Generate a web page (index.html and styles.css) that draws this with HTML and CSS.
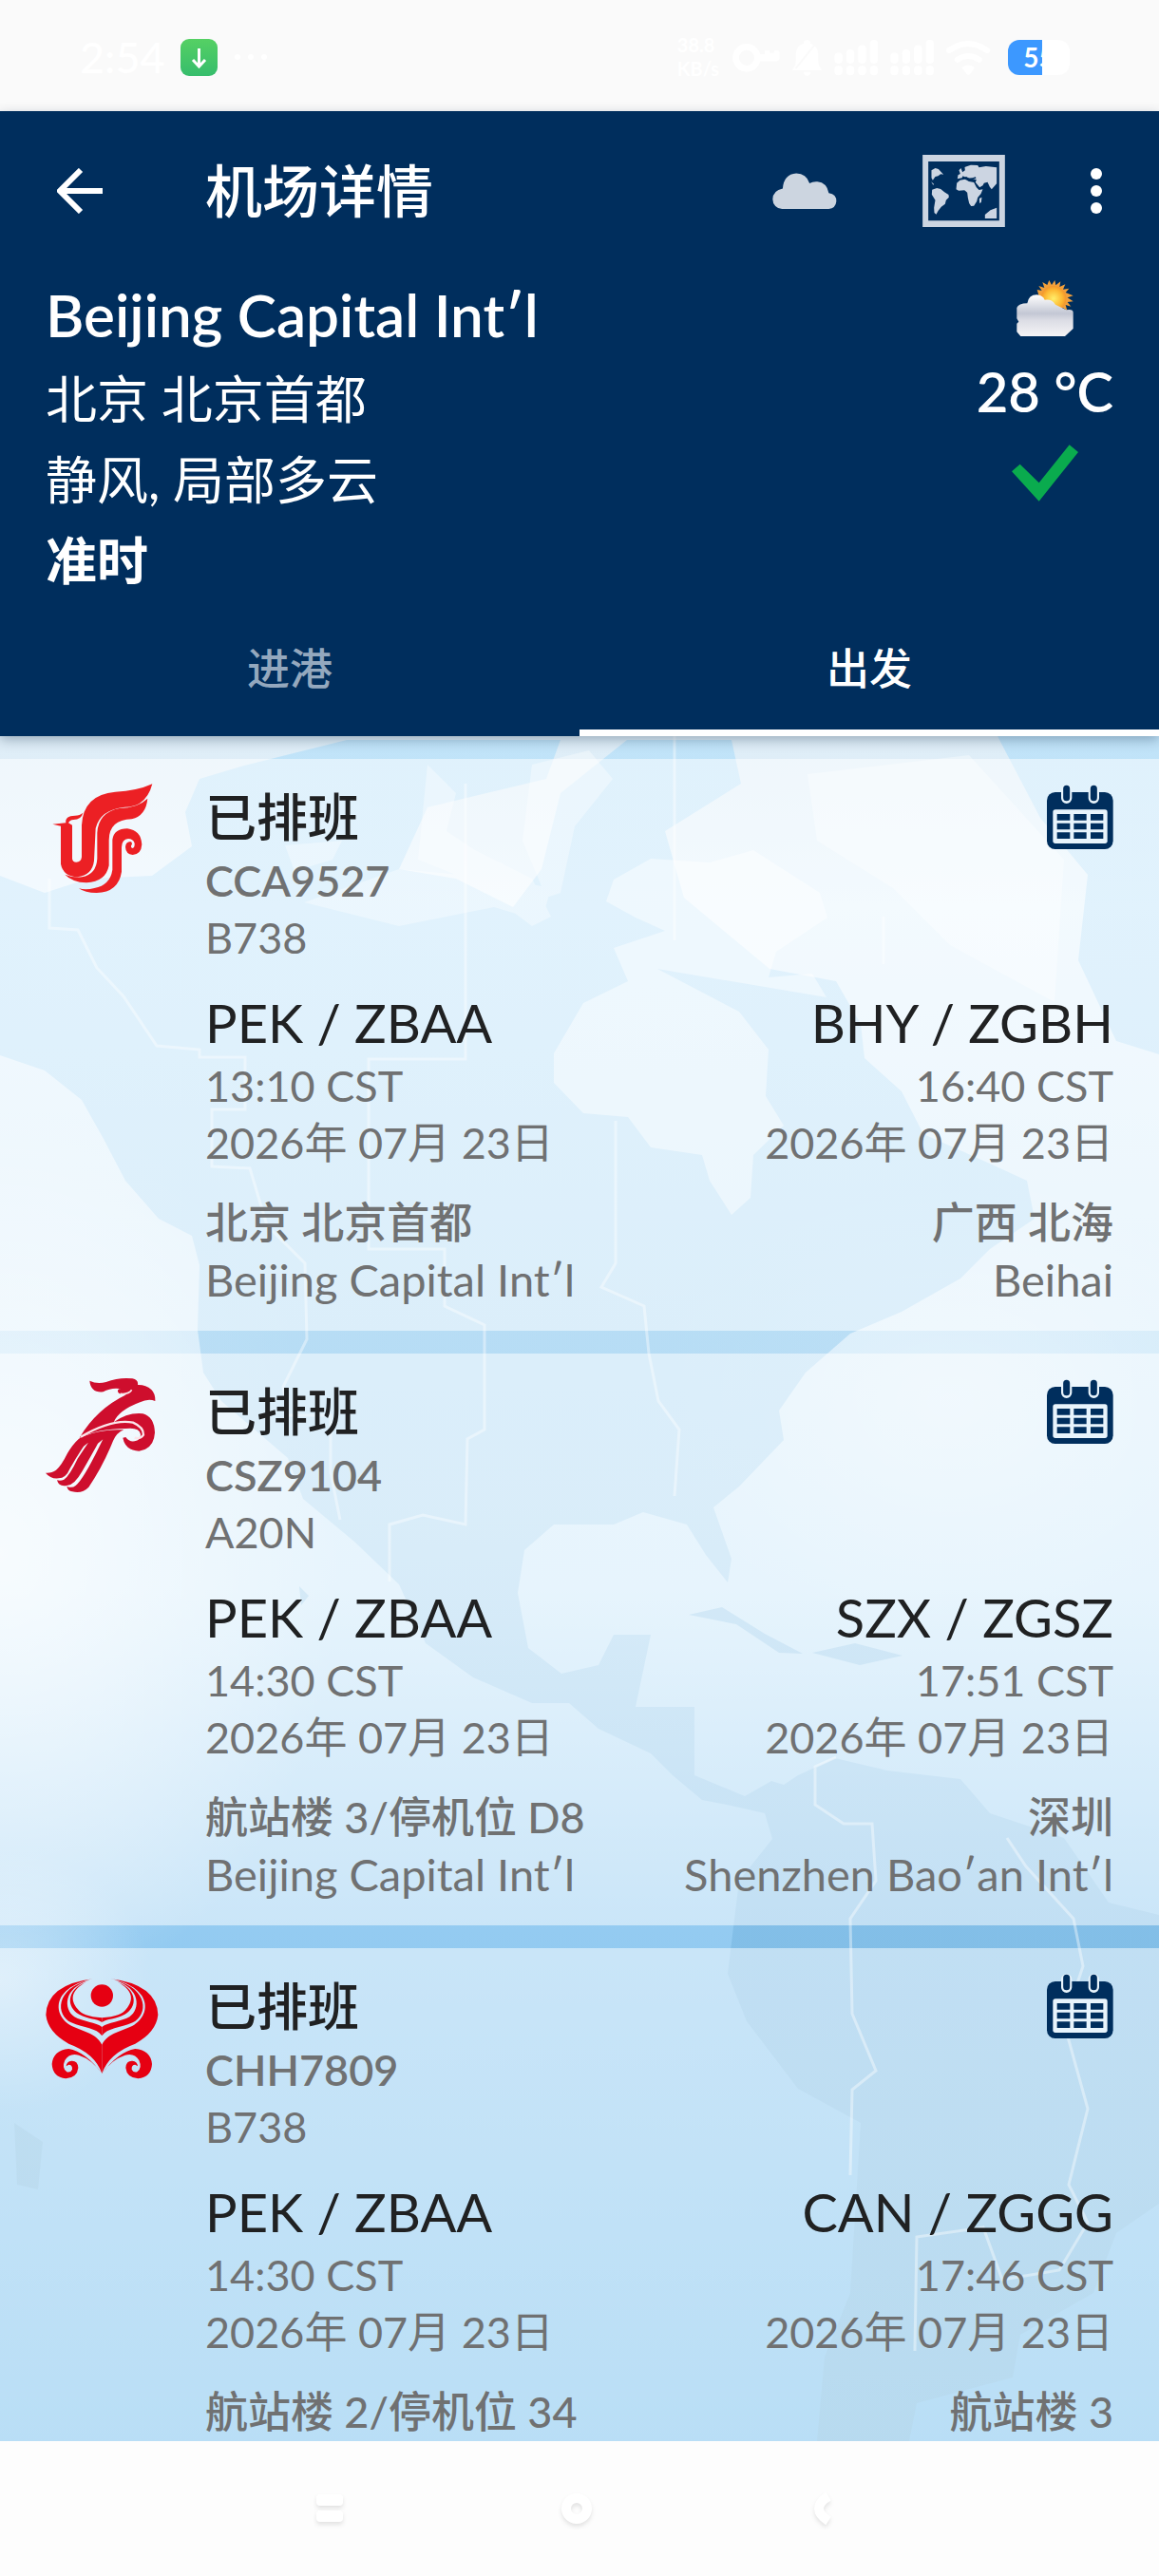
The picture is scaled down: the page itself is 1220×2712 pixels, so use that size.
FILE: index.html
```html
<!DOCTYPE html>
<html lang="zh-CN">
<head>
<meta charset="utf-8">
<meta name="viewport" content="width=device-width, initial-scale=1">
<title>机场详情</title>
<link rel="stylesheet" href="styles.css">
</head>
<body>
<svg class="defs" aria-hidden="true">
  <symbol id="calendar" viewBox="123 45 210 210">
    <path fill="#002e5d" d="M149 72h157a26 26 0 0 1 26 26v128a26 26 0 0 1-26 26H149a26 26 0 0 1-26-26V98a26 26 0 0 1 26-26z"/>
    <rect x="142" y="127" width="172" height="107" rx="8" fill="#e8f4fc"/>
    <path fill="#002e5d" d="M155 141h41v20h-41zM208 141h40v20h-40zM261 141h40v20h-40zM155 170h41v20h-41zM208 170h40v20h-40zM261 170h40v20h-40zM155 199h41v20h-41zM208 199h40v20h-40zM261 199h40v20h-40z"/>
    <g stroke-linecap="round"><path stroke="#e8f4fc" stroke-width="34" d="M185 65v26M271 65v26"/><path stroke="#002e5d" stroke-width="21" d="M185 61v28M271 61v28"/></g>
  </symbol>
</svg>
<div class="app">
  <div class="status">
    <span class="clock">2:54</span>
    <svg class="download" viewBox="0 0 39 39"><defs><linearGradient id="gr" x2="0" y2="1"><stop stop-color="#55d064"/><stop offset="1" stop-color="#36bd6c"/></linearGradient></defs><rect width="39" height="39" rx="9" fill="url(#gr)"/><path d="M19.500 10v18M13 22l6.500 7 6.500-7" fill="none" stroke="#fff" stroke-width="3"/></svg>
    <svg class="more" viewBox="0 0 34 6" fill="#fff"><circle cx="3" cy="3" r="3"/><circle cx="17" cy="3" r="3"/><circle cx="31" cy="3" r="3"/></svg>
    <span class="speed">38.8<br>KB/s</span>
    <svg class="tray" viewBox="257 88 810 116" fill="#fff">
      <circle cx="302" cy="147" r="34" fill="none" stroke="#fff" stroke-width="20"/><path d="M340 136v22h57q8-2 8-10v-16q0-8-7-8h-10v8h-14v-8h-15v12z"/>
      <path d="M444 186q12-14 12-30v-22q2-27 24-31 1-12 11-12t11 12q22 5 24 31v22q0 16 12 30zM480 191h23q-2 12-12 12t-11-12z"/><path d="M456 180l66-82" stroke="#fafafa" stroke-width="6"/>
      <g id="sig"><rect x="577" y="131" width="25" height="34" rx="12"/><rect x="614" y="121" width="25" height="44" rx="12"/><rect x="651" y="107" width="25" height="58" rx="12"/><rect x="688" y="91" width="25" height="74" rx="12"/><rect x="577" y="172" width="25" height="30" rx="12"/><rect x="614" y="172" width="25" height="30" rx="12"/><rect x="651" y="172" width="25" height="30" rx="12"/><rect x="688" y="172" width="25" height="30" rx="12"/></g>
      <use href="#sig" x="175"/>
      <g fill="none" stroke="#fff" stroke-width="18" stroke-linecap="round"><path d="M936 124q60-42 119 0M962 153q34-23 68 0"/></g><path d="M976 178q20-16 40 0l-14 19q-6 6-12 0z"/>
    </svg>
    <span class="battery">55</span>
  </div>

  <header class="header">
    <div class="toolbar">
      <button class="icon-btn back" aria-label="返回"><svg viewBox="0 0 48 48"><path d="M48 24H4M25 2L3 24l22 22" fill="none" stroke="#fff" stroke-width="6"/></svg></button>
      <h1 class="title">机场详情</h1>
      <button class="icon-btn cloud" aria-label="天气"><svg viewBox="162 125 205 116"><path fill="#ccd5e0" d="M193 239a31 31 0 0 1-30-31q1-28 32-34 3-45 43-48 32 1 42 31 10-6 25-5 30 3 36 36 25 3 24 27-2 22-24 24z"/></svg></button>
      <button class="icon-btn map" aria-label="地图"><svg viewBox="638 69 260 228" fill="#ccd5e2"><path fill-rule="evenodd" d="M638 69h260v228H638zM656 90v187h224V90z"/><path d="M666 118L678 111 688 114 704 131 695 130 687 136 678 138 670 149 666 142zM665 154L674 162 671 164z"/><path d="M668 179L683 174 695 177 707 187 720 195 721 203 712 212 709 224 697 233 687 246 681 257 675 252 674 236 678 212 667 194z"/><path d="M744 178L746 158 756 149 772 146 784 153 800 156 808 172 816 180 828 178 822 192 812 204 809 216 800 230 791 231 785 222 781 205 779 188 770 181 752 182zM817 207L825 203 823 219 818 222z"/><path d="M748 145L750 133 757 129 753 118 759 111 764 124 772 118 771 108 790 101 812 102 816 109 838 105 872 109 872 160 856 178 850 170 843 155 832 158 828 166 818 172 805 156 808 147 790 146 776 138 762 142z"/><path d="M835 258L852 244 872 236V270H835z"/><path d="M764 138q18 13 42 3" stroke="#002e5d" stroke-width="5" fill="none"/></svg></button>
      <button class="icon-btn dots" aria-label="更多"><svg viewBox="0 0 12 48" fill="#fff"><circle cx="6" cy="6" r="6"/><circle cx="6" cy="24" r="6"/><circle cx="6" cy="42" r="6"/></svg></button>
    </div>
    <div class="info">
      <div class="airport">
        <p class="name">Beijing Capital Int′l</p>
        <p>北京 北京首都</p>
        <p>静风, 局部多云</p>
        <p class="strong">准时</p>
      </div>
      <div class="weather">
        <svg class="sky" viewBox="147 45 180 180"><defs><linearGradient id="cl" x2="0" y2="1"><stop stop-color="#fff"/><stop offset=".45" stop-color="#c3c7d4"/><stop offset=".62" stop-color="#dcdde5"/><stop offset="1" stop-color="#f5f4f6"/></linearGradient><radialGradient id="su"><stop stop-color="#ffee6a"/><stop offset=".7" stop-color="#fdb833"/><stop offset="1" stop-color="#f3952c"/></radialGradient></defs><path fill="#f1a03c" d="M250 45l8 15 10-15 3 16 15-12-3 17 18-8-7 16 19-3-11 13 24 10-18 6 18 12-18 2 11 14-17-5 5 18-15-10-2 14-12-12-60-38-6-20 15 3-10-15 18 6-6-18 15 9z"/><circle cx="264" cy="103" r="40" fill="url(#su)"/><path fill="url(#cl)" d="M148 132q5-14 33-14 4-27 30-27 20 2 25 16 23-4 34 15l34 17q22-4 22 8v51l-26 24H160l-12-14v-26l6-6-6-10z"/></svg>
        <p class="temp">28 °C</p>
        <svg class="tick" viewBox="132 562 210 180"><path fill="#0aab4e" d="M132 647l26-23 60 59 96-120 28 23-124 155z"/></svg>
      </div>
    </div>
    <nav class="tabs">
      <button class="tab">进港</button>
      <button class="tab active">出发</button>
    </nav>
  </header>

  <main class="list">
    <svg class="world" viewBox="0 0 1220 1795" preserveAspectRatio="none" aria-hidden="true">
      <defs>
        <linearGradient id="sea" x2="0" y2="1"><stop stop-color="#deedf7"/><stop offset=".1" stop-color="#e6f4fd"/><stop offset=".34" stop-color="#d6ecfa"/><stop offset=".5" stop-color="#cee9fa"/><stop offset=".7" stop-color="#94cbf1"/><stop offset="1" stop-color="#73bdec"/></linearGradient>
        <radialGradient id="glow"><stop stop-color="#fff" stop-opacity=".65"/><stop offset="1" stop-color="#fff" stop-opacity="0"/></radialGradient>
        <linearGradient id="land" x2="0" y2="1"><stop stop-color="#a8dbfa" stop-opacity=".55"/><stop offset=".45" stop-color="#a0d0ef" stop-opacity=".6"/><stop offset=".7" stop-color="#72b2de" stop-opacity=".5"/><stop offset="1" stop-color="#6aa9cc" stop-opacity=".4"/></linearGradient>
      </defs>
      <path fill="url(#sea)" d="M0 0h1220v1795H0z"/>
      <ellipse cx="0" cy="860" rx="360" ry="480" fill="url(#glow)"/>
      <ellipse cx="0" cy="1310" rx="160" ry="140" fill="url(#glow)" opacity=".6"/>
      <ellipse cx="1000" cy="700" rx="320" ry="240" fill="url(#glow)" opacity=".5"/>
      <path fill="url(#land)" d="M0 147L47 165 93 150 160 147 202 116 195 80 210 45 257 31 365 4 590 4 575 45 450 75 420 140 480 150 540 180 570 140 590 60 660 4 770 4 780 50 700 100 720 170 810 245 880 258 906 303 910 339 949 374 972 419 1042 450 1081 468 1089 508 1042 540 1011 571 949 606 895 629 848 670 820 710 825 741 778 790 751 812 770 866 766 891 743 862 723 830 677 817 646 830 583 830 552 857 545 902 556 960 591 987 630 978 646 946 685 946 669 1022 731 1022 731 1094 784 1116 812 1100 825 1104 840 1094 879 1076 934 1089 1011 1098 1042 1134 1120 1160 1167 1228 1220 1241 1220 1545 1175 1576 1151 1639 1074 1683 1066 1728 965 1755 957 1795 860 1795 868 1706 895 1639 906 1460 840 1424 786 1353 766 1303 778 1205 813 1161 805 1134 770 1126 739 1120 708 1094 685 1071 630 1045 599 1018 560 1018 498 991 448 955 420 893 373 848 319 803 303 760 233 700 214 670 208 625 210 557 202 526 167 508 132 468 109 424 86 383 47 352 0 336z"/>
      <path fill="url(#land)" d="M1050 0H1220V335L1175 321 1135 236 1145 146 1095 86zM725 925L760 917 805 945 845 966 820 965 775 935zM855 965L900 955 950 968 905 978zM315 895l10 10-8 10zM15 1460l30 20-5 50-22-5z"/>
      <path fill="#fff" opacity=".45" d="M692 245L778 290 809 330 806 379 825 410 793 441 790 486 770 504 747 468 739 441 685 433 661 401 614 397 583 365 583 334 614 281 661 258 646 223 700 205 669 191 638 174 646 151 685 129 747 133 793 120 863 165 871 191 817 227 809 254 855 250 870 275z"/>
      <path fill="#fff" opacity=".35" d="M450 30L480 60 470 100 500 120 560 150 580 190 560 200 520 170 490 150 440 130zM560 30L620 15 645 45 605 95 590 165 575 170 550 110zM300 115L360 110 350 130 310 142zM320 175L420 140 530 150 580 160 570 195 520 180 420 200zM850 40L1020 20 1120 130 1110 280 1000 220 940 160 860 110z"/>
      <g fill="none" stroke="#fff" stroke-width="3" opacity=".4"><path d="M52 150v52l30 2 20 40 28 30 35 52 45 4v8h48v55h-35v60l40 2 18 60 40 40 2 80-25 50 5 30h45v60l10 50M490 50v290H388v200h80v60l42 20v110l-18 10-2 90-45-10-35 10v60M710 0v215M930 190v50M648 405v150l-15 25 45 20 5 50 10 50 22 30-5 70"/><path d="M880 1075l-22 10v40l30 20h30l4 60-27 40 2 100 25 60-25 20-2 90M1060 1160l20 30 50 55 10 50-20 60 25 90-20 80 20 40-30 50-60 10-20-55-70 10-2 120"/></g>
    </svg>

    <article class="card">
      <svg class="logo" viewBox="54 75 360 360" fill="#ec2024"><path d="M391 76q-11 43-40 61-18 11-47 12-78 8-92 67l-5 103q-6 46-52 51-45-2-53-41V209l-26-6 42-4q-4-22 29-23 15 0 25-9-5 21-30 22-12 1-16 10l12 7v106q1 11 13 11 15 0 17-16V206q5-96 106-105 69-3 117-25z"/><path d="M376 122q-5 54-50 65-72 2-72 67v80q-10 51-71 54-45-2-68-26 25 11 54 8 45-8 48-58V230q4-64 70-77 58-1 89-31z"/><path d="M265 252q5-35 47-35 43 5 46 50-2 31-29 33-22-3-23-25 1-16 16-17 5 1 5 8-7 8 1 13 8-2 7-16-5-14-20-14-20 1-21 27v77q-10 65-79 67-37 0-56-14 23 6 49-1 50-10 57-58z"/></svg>
      <div class="body">
        <div class="top">
          <div><h2 class="state">已排班</h2><p class="flight">CCA9527</p><p>B738</p></div>
          <button class="icon-btn cal" aria-label="添加到日历"><svg><use href="#calendar"/></svg></button>
        </div>
        <div class="route">
          <div><p class="code">PEK / ZBAA</p><p>13:10 CST</p><p>2026年 07月 23日</p><p class="place">北京 北京首都</p><p class="field">Beijing Capital Int′l</p></div>
          <div class="to"><p class="code">BHY / ZGBH</p><p>16:40 CST</p><p>2026年 07月 23日</p><p class="place">广西 北海</p><p class="field">Beihai</p></div>
        </div>
      </div>
    </article>

    <article class="card">
      <svg class="logo" viewBox="54 57 360 360" fill="#ce0e2d"><path d="M193 65q23 11 52 4 42-16 83-11 20 4 17 20 25-1 43 15 13 13 12 36-22-9-48 4-67 25-83 63 45-32 92-27 36 9 38 60-3 52-50 58-44-2-51-42l9-2q11 16 28 13 20-3 19-22-4-23-47-18-90 1-146 29 54-91 148-136l-16-2q-12-2-11-12 5-9 17-3-35-8-63 8-39 4-43-35z"/><path d="M168 242q60-26 133-22-22 8-34 35-32 80-77 146-21 22-52 14-14-2-17-17 15 8 28-2 25-22 72-118l14-28-16 13q-15 28-50 89-24 42-45 43-28 7-34-16 12 3 22-2 18-13 43-66l34-51-15 12q-25 38-43 70-13 31-36 31-25 3-41-17 20 1 33-9 17-14 36-53 24-40 45-52z"/><path d="M165 242q100-58 165-45 34 15 33 39-10 15-28 9" fill="none" stroke="#fbe5ea" stroke-width="7"/><path d="M290 106q26 3 36-12" fill="none" stroke="#fbe5ea" stroke-width="5"/></svg>
      <div class="body">
        <div class="top">
          <div><h2 class="state">已排班</h2><p class="flight">CSZ9104</p><p>A20N</p></div>
          <button class="icon-btn cal" aria-label="添加到日历"><svg><use href="#calendar"/></svg></button>
        </div>
        <div class="route">
          <div><p class="code">PEK / ZBAA</p><p>14:30 CST</p><p>2026年 07月 23日</p><p class="place">航站楼 3/停机位 D8</p><p class="field">Beijing Capital Int′l</p></div>
          <div class="to"><p class="code">SZX / ZGSZ</p><p>17:51 CST</p><p>2026年 07月 23日</p><p class="place">深圳</p><p class="field">Shenzhen Bao′an Int′l</p></div>
        </div>
      </div>
    </article>

    <article class="card">
      <svg class="logo" viewBox="54 51 360 360" fill="#e60012"><circle cx="232" cy="123" r="35"/><g id="wing"><path d="M208 69Q58 87 55 184q6 55 72 91 83 30 105 94v-91C215 240 165 235 130 215 75 180 75 95 208 69z"/><path d="M190 75C85 100 85 185 135 208c40 17 80 17 97 42v-28c-17-14-62-17-87-32-35-25-35-90 45-115z"/><path d="M182 80c-64 25-62 80-22 102 30 16 55 13 72 25v-14c-42-3-67-13-77-28-25-30-20-60 27-85z"/><path d="M232 369q-52-69-105-78-49 5-53 48 2 41 44 46 36-3 39-34-1-23-21-22-16 2-17 17l8-5q12 0 11 15-5 11-17 8-17-12-6-37 14-24 44-16 41 13 73 58z"/></g><use href="#wing" transform="translate(464) scale(-1 1)"/></svg>
      <div class="body">
        <div class="top">
          <div><h2 class="state">已排班</h2><p class="flight">CHH7809</p><p>B738</p></div>
          <button class="icon-btn cal" aria-label="添加到日历"><svg><use href="#calendar"/></svg></button>
        </div>
        <div class="route">
          <div><p class="code">PEK / ZBAA</p><p>14:30 CST</p><p>2026年 07月 23日</p><p class="place">航站楼 2/停机位 34</p></div>
          <div class="to"><p class="code">CAN / ZGGG</p><p>17:46 CST</p><p>2026年 07月 23日</p><p class="place">航站楼 3</p></div>
        </div>
      </div>
    </article>
  </main>

  <footer class="navbar">
    <button class="icon-btn nav" aria-label="最近任务"><svg viewBox="0 0 36 36"><rect x="3" y="3" width="28" height="12" rx="4"/><rect x="3" y="20" width="28" height="12" rx="4"/></svg></button>
    <button class="icon-btn nav" aria-label="主屏幕"><svg viewBox="0 0 36 36"><circle cx="18" cy="18" r="11" class="ring"/></svg></button>
    <button class="icon-btn nav" aria-label="返回上级"><svg viewBox="0 0 36 36"><path d="M24 5Q4 18 24 31" class="ring"/></svg></button>
  </footer>
</div>
</body>
</html>
```
FILE: styles.css
```css
* { box-sizing: border-box; margin: 0; padding: 0; }
body {
  font-family: Lato, "Noto Sans CJK SC", sans-serif;
  font-size: 45px;
  line-height: 60px;
  color: #707172;
  background: #fdfdfd;
}
button { font: inherit; color: inherit; background: none; border: 0; }
svg { display: block; }
.defs { position: absolute; width: 0; height: 0; }
.app { display: flex; flex-direction: column; height: 100vh; }
.icon-btn { flex: none; display: flex; align-items: center; justify-content: center; }
.icon-btn svg { width: 100%; height: 100%; }

.status {
  flex: none;
  display: flex;
  align-items: center;
  height: 117px;
  padding: 3px 94px 0 84px;
  background: #fafafa;
  color: #fff;
}
.clock { font-size: 45px; font-weight: 500; }
.download { width: 39px; height: 39px; margin-left: 16px; }
.more { width: 34px; height: 6px; margin-left: 18px; }
.speed { margin-left: auto; font-size: 20px; line-height: 25px; font-weight: 700; }
.tray { width: 276px; height: 39px; margin: 0 16px 0 12px; }
.battery {
  width: 65px;
  height: 37px;
  border-radius: 12px;
  background: linear-gradient(90deg, #3c98ff 36px, #fff 36px);
  font-size: 28px;
  line-height: 37px;
  font-weight: 700;
  text-align: center;
}

.header {
  flex: none;
  position: relative;
  z-index: 2;
  background: #002e5d;
  color: #fff;
  box-shadow: 0 4px 12px rgba(0, 30, 60, .3);
}
.toolbar { display: flex; align-items: center; height: 168px; padding: 0 60px; }
.title { flex: 1; margin-left: 108px; font-size: 60px; line-height: 84px; font-weight: 500; }
.back { width: 48px; height: 48px; }
.cloud { width: 68px; height: 39px; }
.map { width: 87px; height: 76px; margin: 0 90px; }
.dots { width: 12px; height: 48px; }

.info { display: flex; justify-content: space-between; padding: 4px 48px 0; font-size: 54px; line-height: 85px; }
.name { padding-bottom: 4px; font-size: 62px; font-weight: 600; }
.strong { font-weight: 600; }
.weather { display: flex; flex-direction: column; align-items: center; padding-top: 6px; }
.sky { width: 60px; height: 60px; }
.temp { margin-top: 14px; font-size: 58px; font-weight: 600; }
.tick { width: 70px; height: 60px; margin-top: 14px; }

.tabs { display: flex; height: 142px; }
.tab { flex: 1; padding-top: 6px; font-size: 45px; font-weight: 500; color: #94a8be; border-bottom: 7px solid transparent; }
.tab.active { color: #fff; border-color: #fff; }

.list {
  flex: 1;
  min-height: 0;
  position: relative;
  display: flex;
  flex-direction: column;
  gap: 24px;
  padding-top: 24px;
  overflow: hidden;
}
.world { position: absolute; inset: 0; width: 100%; height: 100%; }
.card {
  flex: none;
  position: relative;
  display: flex;
  gap: 48px;
  padding: 26px 48px 24px;
  background: rgba(255, 255, 255, .5);
}
.logo { flex: none; width: 120px; height: 120px; overflow: visible; }
.body { flex: 1; min-width: 0; }
.top, .route { display: flex; justify-content: space-between; align-items: flex-start; }
.route { margin-top: 24px; }
.to { text-align: right; }
.state { font-size: 54px; line-height: 72px; font-weight: 500; color: #202122; }
.flight { font-weight: 600; }
.code { font-size: 56px; line-height: 72px; color: #202122; }
.place { margin-top: 24px; font-weight: 500; }
.field { font-size: 47px; }
.cal { width: 70px; height: 70px; }

.navbar {
  flex: none;
  display: flex;
  justify-content: space-between;
  align-items: center;
  height: 142px;
  padding: 0 336px 0 330px;
  background: #fdfdfd;
}
.nav { width: 36px; height: 36px; }
.nav svg { fill: #fff; filter: drop-shadow(0 3px 2px rgba(0, 0, 0, .1)); overflow: visible; }
.nav .ring { fill: none; stroke: #fff; stroke-width: 10px; }
```
